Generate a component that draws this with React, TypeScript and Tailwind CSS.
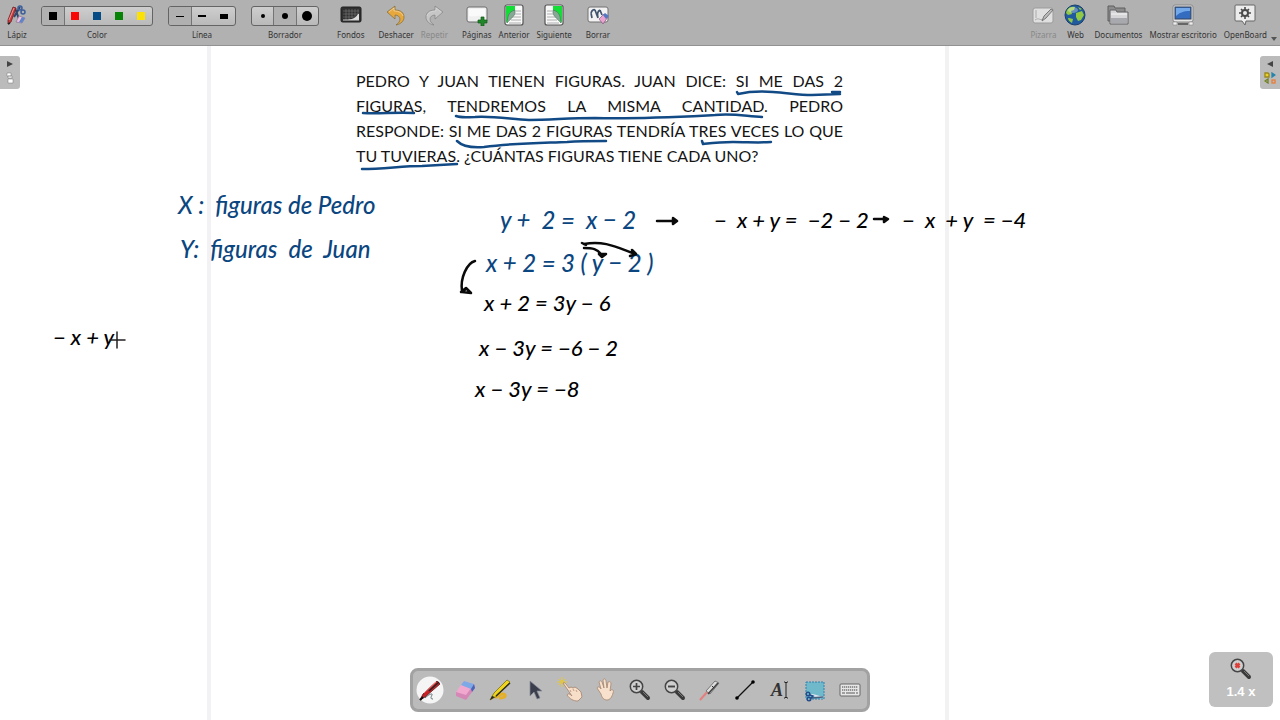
import React from 'react';
import clsx from 'clsx';

const colors = [
  { name: 'Negro', swatch: 'bg-black' },
  { name: 'Rojo', swatch: 'bg-[#f90606]' },
  { name: 'Azul', swatch: 'bg-[#064a86]' },
  { name: 'Verde', swatch: 'bg-[#078407]' },
  { name: 'Amarillo', swatch: 'bg-[#fbe106]' },
];

const lines = [
  { name: 'Línea fina', mark: 'w-2 h-px' },
  { name: 'Línea media', mark: 'w-2 h-[2px]' },
  { name: 'Línea gruesa', mark: 'w-2 h-[5px]' },
];

const erasers = [
  { name: 'Borrador pequeño', mark: 'size-1' },
  { name: 'Borrador mediano', mark: 'size-[6px]' },
  { name: 'Borrador grande', mark: 'size-[10px]' },
];

type IconProps = { className?: string };

const PencilCaseIcon = () => (
  <svg viewBox="0 0 22 22" className="size-[22px]" fill="none">
    <path d="M9 4l4 11M14 3l-6 10" stroke="#30466f" strokeWidth="2" />
    <circle cx="14" cy="4" r="2" stroke="#3c5f9c" strokeWidth="1.5" />
    <circle cx="17" cy="8" r="2" stroke="#3c5f9c" strokeWidth="1.5" />
    <path d="M7 3l3 1-5 14-3 2 0-4z" fill="#c93a3c" stroke="#6c2225" strokeWidth=".8" />
    <path d="M8 4L3 16" stroke="#f19494" />
    <path d="M13 12l6 2-3 5-6-1z" fill="#eec0dc" stroke="#8a7297" strokeWidth=".7" />
    <path d="M16 13l3 1-3 5-3-1z" fill="#5e85c9" />
    <path d="M2 20l2-1" stroke="#222" strokeWidth="1.5" />
  </svg>
);

const BackgroundIcon = () => (
  <svg viewBox="0 0 22 22" className="size-[22px]" fill="none">
    <rect x="1" y="3" width="20" height="15" rx="1.5" fill="#303030" stroke="#202020" />
    <path d="M3 7h16M3 10h16M3 13h13M6 5v11M9 5v11M12 5v9M15 5v7M18 5v5" stroke="#797979" strokeWidth=".6" />
    <path d="M8 16c4-1 8-2 10-6l1 0v6z" fill="#ddd" />
    <path d="M3 16h16" stroke="#ccc" />
  </svg>
);

const UndoIcon = ({ className }: IconProps) => (
  <svg viewBox="0 0 22 22" className={clsx('size-[22px]', className)}>
    <path d="M2 8l8-6v4c6 0 9 3 9 7 0 4-3 7-8 8 3-2 4-4 4-6 0-2-2-4-5-4v4z" fill="currentColor" stroke="#74602c" strokeOpacity=".65" strokeWidth=".9" strokeLinejoin="round" />
    <path d="M4 8l5-4v3c5 0 8 2 9 5" fill="none" stroke="#fff" strokeOpacity=".4" />
  </svg>
);

const AddPageIcon = () => (
  <svg viewBox="0 0 22 22" className="size-[22px]">
    <rect x="1" y="3" width="20" height="15" rx="2" fill="#f0f0f0" stroke="#6d6d6d" />
    <path d="M3 5h16v7c-5-1-10 1-16 0z" fill="#fafafa" />
    <path d="M15 13h3v3h3v3h-3v3h-3v-3h-3v-3h3z" fill="#218829" stroke="#14591a" strokeWidth=".7" />
  </svg>
);

const PageIcon = ({ className }: IconProps) => (
  <svg viewBox="0 0 22 22" className={clsx('size-[22px]', className)}>
    <rect x="2" y="1" width="18" height="20" rx="2" fill="#f8f8f8" stroke="#555" strokeWidth="1.2" />
    <path d="M3 2h9v4L3 19z" fill="#12df36" />
    <path d="M4 19C5 12 5 8 12 6c1 6-4 8-8 13z" fill="#86a895" stroke="#4e6e5c" strokeWidth=".6" />
    <path d="M13 7h5M12 10h6M10 13h8M8 16h10M6 19h12" stroke="#999" strokeWidth=".8" />
  </svg>
);

const ClearIcon = () => (
  <svg viewBox="0 0 22 22" className="size-[22px]" fill="none">
    <rect x="1" y="3" width="20" height="15" rx="2" fill="#f2f2f2" stroke="#717171" />
    <path d="M4 9l1 5M8 6l3 8M13 6l2 5M4 9c1-3 3-4 4-3M11 14c-1-4 0-7 2-8" stroke="#40546f" strokeWidth="1.7" />
    <path d="M12 15l5-5 4 3-5 7z" fill="#eaa3cf" stroke="#704a72" strokeWidth=".6" />
    <path d="M16 11l2-2 4 3-3 3z" fill="#5479c3" />
  </svg>
);

const BoardIcon = () => (
  <svg viewBox="0 0 22 22" className="size-[22px]" fill="none">
    <rect x="1" y="4" width="20" height="15" rx="2" fill="#e0e0e0" stroke="#9b9b9b" />
    <path d="M4 6v8M3 16c4-3 5 1 8-1" stroke="#aaa" />
    <path d="M10 17l2-5 7-7 2 1-7 8z" fill="#bcbcbc" stroke="#777" />
  </svg>
);

const WebIcon = () => (
  <svg viewBox="0 0 22 22" className="size-[22px]">
    <circle cx="11" cy="11" r="10" fill="#215b9d" stroke="#193f6d" />
    <path d="M3 6c2-3 5-4 8-3l-1 3-3 1 1 3-4 1-2-2zM12 9l6-2 2 4-3 5-3 1-2-4zM14 3l4 2-2 1zM5 14l4 1-1 4c-2-1-4-3-4-5z" fill="#91c844" />
    <ellipse cx="9" cy="6" rx="5" ry="3" fill="#fff" opacity=".32" />
  </svg>
);

const FoldersIcon = () => (
  <svg viewBox="0 0 22 22" className="size-[22px]">
    <path d="M1 2h6l1 2h10v13H1z" fill="#8c8c8c" stroke="#5e5e5e" />
    <path d="M3 6h6l1 2h11v12H3z" fill="#d6d6d8" stroke="#626266" />
    <path d="M4 10h16" stroke="#f5f5f5" />
    <path d="M4 14h16v5H4z" fill="#a8a9ae" />
  </svg>
);

const DesktopIcon = () => (
  <svg viewBox="0 0 22 22" className="size-[22px]">
    <rect x="1" y="1" width="20" height="17" rx="2" fill="#e5e5e5" stroke="#888" />
    <rect x="3" y="3" width="16" height="12" fill="#346dc0" stroke="#34455c" />
    <path d="M4 4h14v3C11 7 7 9 4 12z" fill="#73a9ea" />
    <path d="M1 18h4v3H1zM17 18h4v3h-4z" fill="#eee" stroke="#888" strokeWidth=".6" />
    <path d="M6 19h10v2H6z" fill="#666" />
  </svg>
);

const OpenBoardIcon = () => (
  <svg viewBox="0 0 22 22" className="size-[22px]" fill="none">
    <path d="M2 1h18q1 0 1 1v14q0 1-1 1h-8l-1 4-3-4H2q-1 0-1-1V2q0-1 1-1z" fill="#ececec" stroke="#666" />
    <circle cx="11" cy="9" r="3" stroke="#4b4b4b" strokeWidth="2" />
    <path d="M11 3v3M11 12v3M5 9h3M14 9h3M7 5l2 2M13 11l2 2M15 5l-2 2M9 11l-2 2" stroke="#4b4b4b" strokeWidth="1.6" />
  </svg>
);

const Magnifier = ({ sign, className }: { sign: 'in' | 'out' | 'reset'; className?: string }) => (
  <svg viewBox="0 0 24 24" className={clsx('size-6', className)} fill="none">
    <path d="M14 14l6 6" stroke="#3a3a3a" strokeWidth="4" strokeLinecap="round" />
    <path d="M15 14l5 5" stroke="#777" strokeWidth="1" />
    <circle cx="8.5" cy="8.5" r="6.2" fill="#cfcfcf" stroke="#454545" strokeWidth="1.5" />
    {sign === 'in' && <path d="M8.5 5v7M5 8.5h7" stroke="#444" strokeWidth="1.7" />}
    {sign === 'out' && <path d="M5 8.5h7" stroke="#444" strokeWidth="1.9" />}
    {sign === 'reset' && <path d="M6.5 6.5l4 4M10.5 6.5l-4 4" stroke="#dc3e38" strokeWidth="2.5" />}
  </svg>
);

const stylusTools = [
  {
    name: 'Lápiz',
    icon: (
      <svg viewBox="0 0 28 28" className="size-7" fill="none">
        <circle cx="14" cy="14" r="13.5" fill="#f5f5f5" />
        <path d="M9 22c4-4 8-5 7-3s-2 4 1 4" stroke="#5c7077" />
        <path d="M4 24l3-6L21 5l3 3L9 21z" fill="#c92026" stroke="#591a1c" strokeWidth=".8" />
        <path d="M13 15L23 6" stroke="#252525" strokeWidth="1.6" />
        <path d="M8 17L20 6" stroke="#f37c7b" />
        <path d="M4 24l3-3" stroke="#111" strokeWidth="2" />
      </svg>
    ),
  },
  {
    name: 'Borrador',
    icon: (
      <svg viewBox="0 0 24 24" className="size-6">
        <path d="M3 14L11 3l10 3-8 13-10-2z" fill="#f0a8cf" />
        <path d="M3 14l10 3 8-11 1 4-9 12-10-4z" fill="#d587b5" />
        <path d="M8 7l3-4 10 3-3 5z" fill="#7da9e6" />
        <path d="M18 11l3-5 1 4-3 4z" fill="#4666bb" />
      </svg>
    ),
  },
  {
    name: 'Marcador',
    icon: (
      <svg viewBox="0 0 24 24" className="size-6" fill="none">
        <path d="M7 20c4-4 9-5 10-3s-2 3-6 3" stroke="#e5af28" strokeWidth="3" />
        <path d="M2 22l4-7L19 2l3 2L9 18z" fill="#efd51c" stroke="#70650e" strokeWidth=".7" />
        <path d="M8 18L22 5" stroke="#302f19" strokeWidth="1.4" />
        <path d="M2 22l2-4 3 1z" fill="#222" />
      </svg>
    ),
  },
  {
    name: 'Seleccionar',
    icon: (
      <svg viewBox="0 0 24 24" className="size-6">
        <path d="M7 3v15l4-4 3 7 3-1-3-7h5z" fill="#3b3e4c" stroke="#888b98" strokeWidth=".7" />
      </svg>
    ),
  },
  {
    name: 'Interactuar',
    icon: (
      <svg viewBox="0 0 28 28" className="size-7" fill="none">
        <path d="M6 1v10M1 6h10M3 3l6 6M9 3L3 9" stroke="#e9c82c" strokeWidth="1" />
        <path d="M7 7c2-1 3 1 6 5l2-1 2 1 2-1 3 2 3 3 1 5-4 4c-5 0-8-2-11-6 1-2 3-1 5 1z" fill="#f7dec9" stroke="#a3826c" strokeWidth=".8" />
        <path d="M14 14l1 2M17 13l1 2M20 14l1 2" stroke="#b48f79" strokeWidth=".8" />
      </svg>
    ),
  },
  {
    name: 'Desplazar página',
    icon: (
      <svg viewBox="0 0 24 24" className="size-6">
        <path d="M8 16l-4-6c1-2 3-1 4 1L6 4c1-2 2-1 3 0l2 6-1-8c1-2 3-1 3 1l1 7 1-6c2-1 3 0 3 2l-1 7 1-1c2-1 3 1 2 3-1 4-3 7-6 7-3 0-5-2-6-6z" fill="#f7e1cc" stroke="#a78770" strokeWidth=".8" />
      </svg>
    ),
  },
  { name: 'Acercar', icon: <Magnifier sign="in" /> },
  { name: 'Alejar', icon: <Magnifier sign="out" /> },
  {
    name: 'Puntero láser',
    icon: (
      <svg viewBox="0 0 24 24" className="size-6" fill="none">
        <path d="M2 22l8-9" stroke="#e57e7e" strokeWidth="2" />
        <path d="M8 13L17 3l4 2-9 11z" fill="#dedede" stroke="#777" />
        <path d="M10 16l10-11" stroke="#434343" strokeWidth="1.6" />
        <path d="M14 8l2 2" stroke="#333" />
      </svg>
    ),
  },
  {
    name: 'Dibujar líneas',
    icon: (
      <svg viewBox="0 0 24 24" className="size-6">
        <path d="M4 20L20 4" stroke="#111" strokeWidth="1.3" />
        <circle cx="4" cy="20" r="1.8" />
        <circle cx="20" cy="4" r="1.8" />
      </svg>
    ),
  },
  {
    name: 'Escribir texto',
    icon: (
      <span className="flex items-center font-['Liberation_Serif',serif] text-lg leading-none">
        <span className="italic font-bold text-[#333]">A</span>
        <svg viewBox="0 0 6 18" className="h-[18px] w-[6px]" fill="none" stroke="#222">
          <path d="M1 1h1l1 1 1-1h1M3 2v14M1 17h1l1-1 1 1h1" />
        </svg>
      </span>
    ),
  },
  {
    name: 'Capturar',
    icon: (
      <svg viewBox="0 0 24 24" className="size-6" fill="none">
        <rect x="3" y="4" width="18" height="17" fill="#70b9cb" stroke="#3280ae" strokeDasharray="2 1" />
        <path d="M8 17c5 0 8 3 12 2" stroke="#dce5ef" strokeWidth="2" />
        <path d="M8 20l12-1" stroke="#46607e" strokeWidth="1.5" />
        <circle cx="5" cy="16" r="1.8" stroke="#234c8b" strokeWidth="1.4" />
        <circle cx="6" cy="21" r="1.8" stroke="#234c8b" strokeWidth="1.4" />
        <path d="M7 17l3 1-2 2" stroke="#234c8b" strokeWidth="1.5" />
      </svg>
    ),
  },
  {
    name: 'Teclado virtual',
    icon: (
      <svg viewBox="0 0 24 24" className="size-6" fill="none">
        <rect x="2" y="6" width="20" height="12" rx="1" fill="#e7e7e7" stroke="#666" />
        <path d="M4 9h16M4 12h16" stroke="#777" strokeWidth="1.4" strokeDasharray="1.3 .7" />
        <path d="M4 15h3M8 15h9M18 15h2" stroke="#888" strokeWidth="1.4" />
      </svg>
    ),
  },
];

// Anchor positions of the notes written on the board
const notes = [
  { text: 'X :  figuras de Pedro', place: 'left-[178px] top-[145px] text-2xl leading-7 text-[#0b4680]' },
  { text: 'Y:  figuras  de  Juan', place: 'left-[180px] top-[189px] text-2xl leading-7 text-[#0b4680]' },
  { text: 'y +  2 =  x − 2', place: 'left-[500px] top-[160px] text-2xl leading-7 text-[#0b4680]' },
  { text: 'x + 2 = 3 ( y − 2 )', place: 'left-[486px] top-[203px] text-2xl leading-7 text-[#0b4680]' },
  { text: 'x + 2 = 3y − 6', place: 'left-[484px] top-[243px] text-[22px] leading-7' },
  { text: 'x − 3y = −6 − 2', place: 'left-[479px] top-[288px] text-[22px] leading-7' },
  { text: 'x − 3y = −8', place: 'left-[475px] top-[329px] text-[22px] leading-7' },
  { text: '−  x + y =  −2 − 2', place: 'left-[714px] top-[160px] text-[22px] leading-7' },
  { text: '−  x  + y  = −4', place: 'left-[902px] top-[160px] text-[22px] leading-7' },
  { text: '− x + y', place: 'left-[53px] top-[277px] text-[22px] leading-7' },
];

const ToolButton = ({ label, children, disabled }: { label: string; children: React.ReactNode; disabled?: boolean }) => (
  <button type="button" disabled={disabled} className={clsx('flex flex-col items-center gap-[3px] min-w-6', disabled && 'text-[#888888]')}>
    <span className="flex h-[22px] items-center">{children}</span>
    <span className="leading-3 whitespace-nowrap">{label}</span>
  </button>
);

const Palette = ({ label, items, children }: { label: string; items: string[]; children: (index: number) => React.ReactNode }) => {
  const [selected, setSelected] = React.useState(label === 'Borrador' ? 1 : 0);
  return (
    <div role="group" aria-label={label} className="flex flex-col items-center gap-[3px]">
      <div className="flex h-[22px] items-end">
        <div className="flex h-5 overflow-hidden rounded-[3px] border border-[#646464] bg-linear-to-b from-[#cecece] to-[#b9b9b9]">
          {items.map((item, index) => (
            <button
              key={item}
              type="button"
              aria-label={item}
              onClick={() => setSelected(index)}
              className={clsx(
                'flex w-[22px] items-center justify-center',
                selected === index && 'bg-[#b0b0b0] outline outline-[#747474]'
              )}
            >
              {children(index)}
            </button>
          ))}
        </div>
      </div>
      <span className="leading-3">{label}</span>
    </div>
  );
};

const Toolbar = () => (
  <header className="relative flex h-[46px] items-start justify-between border-b border-[#929292] bg-[#b1b1b1] pt-1 pl-[5px] pr-[13px] font-['Noto_Sans',sans-serif] text-[8px] text-[#333333]">
    <div className="flex gap-[18px]">
      <div className="flex gap-[15px]">
        <div className="flex gap-3">
          <ToolButton label="Lápiz"><PencilCaseIcon /></ToolButton>
          <Palette label="Color" items={colors.map((c) => c.name)}>
            {(i) => <span className={clsx('size-2', colors[i].swatch)} />}
          </Palette>
        </div>
        <Palette label="Línea" items={lines.map((l) => l.name)}>
          {(i) => <span className={clsx('bg-black', lines[i].mark)} />}
        </Palette>
        <Palette label="Borrador" items={erasers.map((e) => e.name)}>
          {(i) => <span className={clsx('rounded-full bg-black', erasers[i].mark)} />}
        </Palette>
      </div>
      <div className="flex gap-[14px]">
        <ToolButton label="Fondos"><BackgroundIcon /></ToolButton>
        <div className="flex gap-[7px]">
          <ToolButton label="Deshacer"><UndoIcon className="text-[#e6a83d]" /></ToolButton>
          <ToolButton label="Repetir" disabled><UndoIcon className="-scale-x-100 text-[#cfcfcf] grayscale opacity-70" /></ToolButton>
        </div>
        <div className="flex gap-[7px]">
          <ToolButton label="Páginas"><AddPageIcon /></ToolButton>
          <ToolButton label="Anterior"><PageIcon /></ToolButton>
          <ToolButton label="Siguiente"><PageIcon className="-scale-x-100" /></ToolButton>
        </div>
        <ToolButton label="Borrar"><ClearIcon /></ToolButton>
      </div>
    </div>
    <div className="flex gap-[7px]">
      <ToolButton label="Pizarra" disabled><BoardIcon /></ToolButton>
      <ToolButton label="Web"><WebIcon /></ToolButton>
      <ToolButton label="Documentos"><FoldersIcon /></ToolButton>
      <ToolButton label="Mostrar escritorio"><DesktopIcon /></ToolButton>
      <ToolButton label="OpenBoard"><OpenBoardIcon /></ToolButton>
    </div>
    <svg viewBox="0 0 6 4" className="absolute right-[3px] bottom-1 h-1 w-[6px]"><path d="M0 0h6L3 4z" fill="#555" /></svg>
  </header>
);

// Pen strokes: underlines, arrows and the crosshair pointer
const Ink = () => (
  <svg viewBox="0 46 1280 674" className="absolute top-0 left-0 w-[1280px] h-[674px] pointer-events-none" fill="none" strokeLinecap="round" strokeLinejoin="round">
    <g stroke="#124a86" strokeWidth="2.5">
      <path d="M737 92l1 2c9-2 22-3 35-2 15 1 26 3 39 3l28-1M832 92h8" />
      <path d="M363 113c16 1 32-1 51 0" />
      <path d="M456 116c5 2 11 1 19 1 19-1 35 2 54 3 22 0 39-2 66-2 45 1 80-1 120-3 17-2 30 1 47 2" />
      <path d="M457 141c5 5 15 7 27 6 30-4 57-4 83-5 13-1 24-1 39-1" />
      <path d="M702 141l1 3c9-1 17-2 30-2 15 0 25 1 38 0" />
      <path d="M362 169c22 0 40-3 60-3l35-2" />
    </g>
    <g stroke="#0a0a0a" strokeWidth="2.5">
      <path d="M657 221h18M673 218l4 3-4 3zM874 219h13M884 217l4 2-4 3z" />
      <path d="M475 261c-8 2-15 17-13 30M461 292l5-4 5 5-9-1 4-3" />
      <path d="M584 244c21-4 34 4 51 10M632 250l4 4-6 2M584 248c9 0 13 1 17 6M599 254l7 0-4 3z" />
      <path d="M582 243l4 2" />
    </g>
    <path d="M110 340h15M117 332v16" stroke="#222" strokeWidth="1.5" />
  </svg>
);

const App = () => {
  return (
    <div className="flex min-h-screen flex-col bg-white">
      <Toolbar />

      <main className="relative flex-1 overflow-hidden">
        {/* Board content */}
        <div className="absolute inset-y-0 left-1/2 w-[1280px] -translate-x-1/2">
          <div className="absolute inset-y-0 left-[207px] w-[742px] border-x-4 border-[#f2f2f4]" />
          <p className="absolute left-[356px] top-[22px] w-[487px] text-justify font-['Lato',sans-serif] text-base leading-[25px] text-[#151515]">
            PEDRO Y JUAN TIENEN FIGURAS. JUAN DICE: SI ME DAS 2 FIGURAS, TENDREMOS LA MISMA CANTIDAD. PEDRO
            RESPONDE: SI ME DAS 2 FIGURAS TENDRÍA TRES VECES LO QUE TU TUVIERAS. ¿CUÁNTAS FIGURAS TIENE CADA UNO?
          </p>
          {notes.map((note) => (
            <p
              key={note.place}
              className={clsx("absolute whitespace-pre font-['Lato',sans-serif] italic font-medium", note.place)}
            >
              {note.text}
            </p>
          ))}
          <Ink />
        </div>

        {/* Side palettes */}
        <button type="button" aria-label="Páginas del documento" className="absolute left-0 top-[10px] flex h-[33px] w-5 flex-col items-center justify-center gap-[5px] rounded-r-[3px] bg-[#bbbbbb]">
          <svg viewBox="0 0 6 6" className="size-[6px]"><path d="M0 0l6 3-6 3z" fill="#444" /></svg>
          <svg viewBox="0 0 8 12" className="h-3 w-2"><path d="M1 1h4v3H1zM2 4h4v2H2zM2 7h5v4H2z" fill="#fff" stroke="#777" strokeWidth=".5" /></svg>
        </button>
        <button type="button" aria-label="Biblioteca" className="absolute right-0 top-[10px] flex h-[33px] w-5 flex-col items-center justify-center gap-[5px] rounded-l-[3px] bg-[#bbbbbb]">
          <svg viewBox="0 0 6 6" className="size-[6px]"><path d="M6 0L0 3l6 3z" fill="#444" /></svg>
          <svg viewBox="0 0 12 12" className="size-3" fill="none" strokeWidth="1.3">
            <path d="M1 1h3l1 1v3H1z" fill="#ead428" stroke="#9b8618" />
            <path d="M8 1l3 2-3 2z" fill="#2684ab" stroke="#2684ab" />
            <path d="M1 9l3-2v4z" stroke="#70821f" />
            <rect x="8" y="8" width="3" height="3" stroke="#ea7d39" />
          </svg>
        </button>

        {/* Stylus palette */}
        <div className="absolute bottom-2 left-1/2 flex h-11 -translate-x-1/2 items-center gap-[3px] rounded-lg border-[3px] border-[#a2a2a2] bg-[#bbbbbb] px-px">
          {stylusTools.map((tool) => (
            <button key={tool.name} type="button" aria-label={tool.name} className="flex size-8 items-center justify-center">
              {tool.icon}
            </button>
          ))}
        </div>

        {/* Zoom indicator */}
        <button type="button" className="absolute bottom-[13px] right-[7px] flex h-[55px] w-16 flex-col items-center justify-center gap-px rounded-md bg-[#c0c0c0] font-['Liberation_Sans',sans-serif] text-[13px] font-bold leading-5 text-white">
          <Magnifier sign="reset" />
          <span>1.4 x</span>
        </button>
      </main>
    </div>
  );
};

export default App;
